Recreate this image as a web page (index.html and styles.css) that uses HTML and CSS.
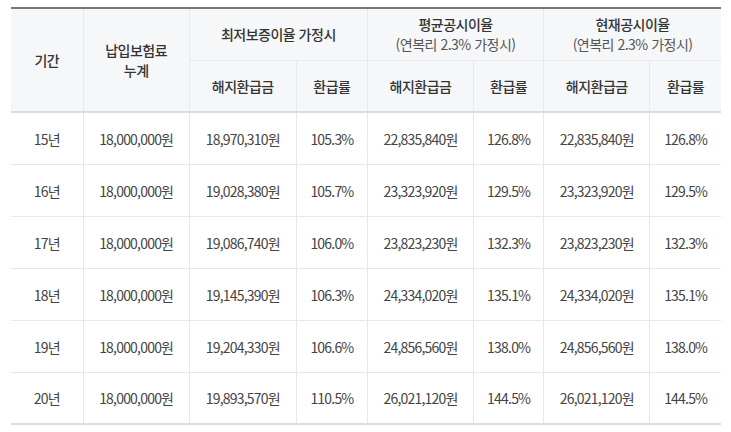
FILE: index.html
```html
<!DOCTYPE html>
<html lang="ko">
<head>
<meta charset="utf-8">
<link rel="stylesheet" href="styles.css">
</head>
<body>
<div class="wrap">
<table class="rate-table">
  <colgroup>
    <col class="c-period">
    <col class="c-wide">
    <col class="c-wide2">
    <col class="c-narrow">
    <col class="c-wide">
    <col class="c-narrow2">
    <col class="c-wide">
    <col class="c-narrow">
  </colgroup>
  <thead>
    <tr class="h1">
      <th rowspan="2">기간</th>
      <th rowspan="2">납입보험료<br>누계</th>
      <th colspan="2">최저보증이율 가정시</th>
      <th colspan="2">평균공시이율<br><span class="sub">(연복리 2.3% 가정시)</span></th>
      <th colspan="2">현재공시이율<br><span class="sub">(연복리 2.3% 가정시)</span></th>
    </tr>
    <tr class="h2">
      <th>해지환급금</th>
      <th>환급률</th>
      <th>해지환급금</th>
      <th>환급률</th>
      <th>해지환급금</th>
      <th>환급률</th>
    </tr>
  </thead>
  <tbody>
    <tr><td>15년</td><td>18,000,000원</td><td>18,970,310원</td><td>105.3%</td><td>22,835,840원</td><td>126.8%</td><td>22,835,840원</td><td>126.8%</td></tr>
    <tr><td>16년</td><td>18,000,000원</td><td>19,028,380원</td><td>105.7%</td><td>23,323,920원</td><td>129.5%</td><td>23,323,920원</td><td>129.5%</td></tr>
    <tr><td>17년</td><td>18,000,000원</td><td>19,086,740원</td><td>106.0%</td><td>23,823,230원</td><td>132.3%</td><td>23,823,230원</td><td>132.3%</td></tr>
    <tr><td>18년</td><td>18,000,000원</td><td>19,145,390원</td><td>106.3%</td><td>24,334,020원</td><td>135.1%</td><td>24,334,020원</td><td>135.1%</td></tr>
    <tr><td>19년</td><td>18,000,000원</td><td>19,204,330원</td><td>106.6%</td><td>24,856,560원</td><td>138.0%</td><td>24,856,560원</td><td>138.0%</td></tr>
    <tr class="last"><td>20년</td><td>18,000,000원</td><td>19,893,570원</td><td>110.5%</td><td>26,021,120원</td><td>144.5%</td><td>26,021,120원</td><td>144.5%</td></tr>
  </tbody>
</table>
</div>
</body>
</html>
```

FILE: styles.css
```css
html, body {
  margin: 0;
  padding: 0;
  background: #fff;
}
.wrap {
  padding: 7px 10px 0 11px;
}
.rate-table {
  width: 710px;
  table-layout: fixed;
  border-collapse: collapse;
  font-family: "Noto Sans CJK KR", "Noto Sans", sans-serif;
  font-size: 14px;
  letter-spacing: -0.5px;
  color: #444;
  border-top: 2px solid #777;
  border-bottom: 2px solid #dcdcdc;
}
.c-period { width: 72px; }
.c-wide { width: 106px; }
.c-wide2 { width: 107px; }
.c-narrow { width: 71px; }
.c-narrow2 { width: 70px; }
.rate-table th {
  background: #f5f7f9;
  color: #333;
  font-weight: 500;
  line-height: 20px;
  padding: 0;
  text-align: center;
  vertical-align: middle;
  border-left: 1px solid #e8eaed;
  border-top: 1px solid #e8eaed;
}
.rate-table tr.h1 th { border-top: none; }
.rate-table tr.h1 { height: 52px; }
.rate-table tr.h2 { height: 52px; }
.rate-table thead tr.h2 th { border-bottom: 2px solid #dcdcdc; }
.rate-table thead tr.h1 th[rowspan] { border-bottom: 2px solid #dcdcdc; }
.rate-table th:first-child { border-left: none; }
.rate-table tr.h2 th:first-child { border-left: 1px solid #e8eaed; }
.sub {
  font-weight: 400;
  color: #555;
}
.rate-table td {
  height: 51px;
  padding: 0;
  letter-spacing: -0.8px;
  text-align: center;
  vertical-align: middle;
  border-left: 1px solid #e8e8e8;
  border-top: 1px solid #e8e8e8;
}
.rate-table tr.last td { height: 50px; }
.rate-table td:first-child { border-left: none; }
.rate-table tbody tr:first-child td { border-top: none; }
```
